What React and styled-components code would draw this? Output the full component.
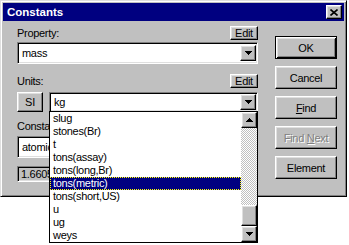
import styled, { createGlobalStyle, css } from "styled-components"

const Global = createGlobalStyle`
html, body, #root{
  margin:0;
  height:245px;
  overflow:hidden;
}
body{
  background:#fff;
  font-family:"Liberation Sans", Arial, sans-serif;
  font-size:11px;
  letter-spacing:-0.3px;
}
`

const raised = css`
  box-sizing:border-box;
  background:#c0c0c0;
  border:1px solid;
  border-color:#fff #000 #000 #fff;
  box-shadow:inset -1px -1px #808080, inset 1px 1px #dfdfdf;
`

const sunken = css`
  box-sizing:border-box;
  border:1px solid;
  border-color:#808080 #fff #fff #808080;
  box-shadow:inset 1px 1px #000, inset -1px -1px #dfdfdf;
`

const Page = styled.div`
  width:349px;
  height:245px;
  background:#fff;
`

const Window = styled.div`
  position:relative;
  box-sizing:border-box;
  width:347px;
  height:197px;
  background:#c0c0c0;
  border:1px solid;
  border-color:#dfdfdf #000 #000 #dfdfdf;
  box-shadow:inset 1px 1px #fff, inset -1px -1px #808080;
  padding:2px;
`

const TitleBar = styled.div`
  height:18px;
  background:#000080;
  display:flex;
  align-items:center;
  justify-content:space-between;
  padding:0 2px 0 4px;
  color:#fff;
  font-weight:bold;
  font-size:11.5px;
  letter-spacing:0;
`

const CloseBtn = styled.div`
  ${raised};
  width:16px;
  height:14px;
  display:flex;
  align-items:center;
  justify-content:center;
`

const Body = styled.div`
  display:flex;
  padding:5px 0 0 14px;
`

const Left = styled.div`
  position:relative;
  width:241px;
  display:flex;
  flex-direction:column;
`

const LabelRow = styled.div`
  height:14px;
  margin-top:${(p) => p.$top || 0}px;
  display:flex;
  align-items:center;
  justify-content:space-between;
  color:#000;
`

const SmallBtn = styled.div`
  ${raised};
  width:${(p) => p.$w || 28}px;
  height:${(p) => p.$h || 14}px;
  display:flex;
  align-items:center;
  justify-content:center;
`

const Combo = styled.div`
  ${sunken};
  height:20px;
  flex:1;
  margin-top:${(p) => p.$top || 0}px;
  background:#fff;
  display:flex;
  align-items:center;
  padding:2px 1px 2px 2px;
`

const ComboText = styled.div`
  flex:1;
  padding-left:2px;
  white-space:nowrap;
  overflow:hidden;
`

const ArrowBtn = styled.div`
  ${raised};
  width:16px;
  height:16px;
  flex:none;
  display:flex;
  align-items:center;
  justify-content:center;
`

const UnitsRow = styled.div`
  display:flex;
  gap:6px;
  margin-top:4px;
`

const ValueBox = styled.div`
  ${sunken};
  height:16px;
  width:150px;
  margin-top:8px;
  background:#c0c0c0;
  padding:0 3px;
  display:flex;
  align-items:center;
`

const Right = styled.div`
  margin-left:17px;
  width:62px;
  display:flex;
  flex-direction:column;
  gap:7px;
  padding-top:10px;
`

const Button = styled.div`
  ${raised};
  height:23px;
  display:flex;
  align-items:center;
  justify-content:center;
  color:${(p) => (p.$disabled ? "#808080" : "#000")};
  text-shadow:${(p) => (p.$disabled ? "1px 1px #fff" : "none")};
  ${(p) =>
    p.$default &&
    css`
      border:1px solid #000;
      box-shadow:inset 1px 1px #fff, inset -1px -1px #000, inset 2px 2px #dfdfdf, inset -2px -2px #808080;
    `}
`

const DropList = styled.div`
  position:absolute;
  top:85px;
  left:32px;
  width:209px;
  height:132px;
  box-sizing:border-box;
  border:1px solid #000;
  background:#fff;
  display:flex;
  z-index:2;
`

const Items = styled.div`
  flex:1;
  display:flex;
  flex-direction:column;
`

const Item = styled.div`
  height:13px;
  line-height:13px;
  padding-left:3px;
  white-space:nowrap;
  ${(p) =>
    p.$selected &&
    css`
      background:#000080;
      color:#fff;
      outline:1px dotted #ffff00;
      outline-offset:-1px;
    `}
`

const ScrollBar = styled.div`
  width:16px;
  display:flex;
  flex-direction:column;
`

const Track = styled.div`
  flex:1;
  display:flex;
  flex-direction:column;
  justify-content:flex-end;
  background:repeating-conic-gradient(#c0c0c0 0 25%, #fff 0 50%) 0 0/2px 2px;
`

const Thumb = styled.div`
  ${raised};
  height:21px;
`

const Tri = ({ up }) => (
  <svg width="7" height="4" viewBox="0 0 7 4" shapeRendering="crispEdges">
    <polygon points={up ? "3.5,0 7,4 0,4" : "0,0 7,0 3.5,4"} fill="#000" />
  </svg>
)

const units = ["slug", "stones(Br)", "t", "tons(assay)", "tons(long,Br)", "tons(metric)", "tons(short,US)", "u", "ug", "weys"]

export default function App() {
  return (
    <Page>
      <Global />
      <Window>
        <TitleBar>
          <span>Constants</span>
          <CloseBtn>
            <svg width="8" height="7" viewBox="0 0 8 7">
              <path d="M0.5 0.5 L7.5 6.5 M7.5 0.5 L0.5 6.5" stroke="#000" strokeWidth="1.6" />
            </svg>
          </CloseBtn>
        </TitleBar>
        <Body>
          <Left>
            <LabelRow>
              <span>Property:</span>
              <SmallBtn>Edit</SmallBtn>
            </LabelRow>
            <Combo $top={2}>
              <ComboText>mass</ComboText>
              <ArrowBtn><Tri /></ArrowBtn>
            </Combo>
            <LabelRow $top={10}>
              <span>Units:</span>
              <SmallBtn>Edit</SmallBtn>
            </LabelRow>
            <UnitsRow>
              <SmallBtn $w={26} $h={20}>SI</SmallBtn>
              <Combo>
                <ComboText>kg</ComboText>
                <ArrowBtn><Tri /></ArrowBtn>
              </Combo>
            </UnitsRow>
            <LabelRow $top={7}>
              <span>Constant:</span>
            </LabelRow>
            <Combo $top={3}>
              <ComboText>atomic mass unit</ComboText>
              <ArrowBtn><Tri /></ArrowBtn>
            </Combo>
            <ValueBox>1.6605402e-27</ValueBox>
            <DropList>
              <Items>
                {units.map((u) => (
                  <Item key={u} $selected={u === "tons(metric)"}>{u}</Item>
                ))}
              </Items>
              <ScrollBar>
                <ArrowBtn><Tri up /></ArrowBtn>
                <Track><Thumb /></Track>
                <ArrowBtn><Tri /></ArrowBtn>
              </ScrollBar>
            </DropList>
          </Left>
          <Right>
            <Button $default>OK</Button>
            <Button>Cancel</Button>
            <Button><span><u>F</u>ind</span></Button>
            <Button $disabled><span>Find <u>N</u>ext</span></Button>
            <Button>Element</Button>
          </Right>
        </Body>
      </Window>
    </Page>
  )
}
